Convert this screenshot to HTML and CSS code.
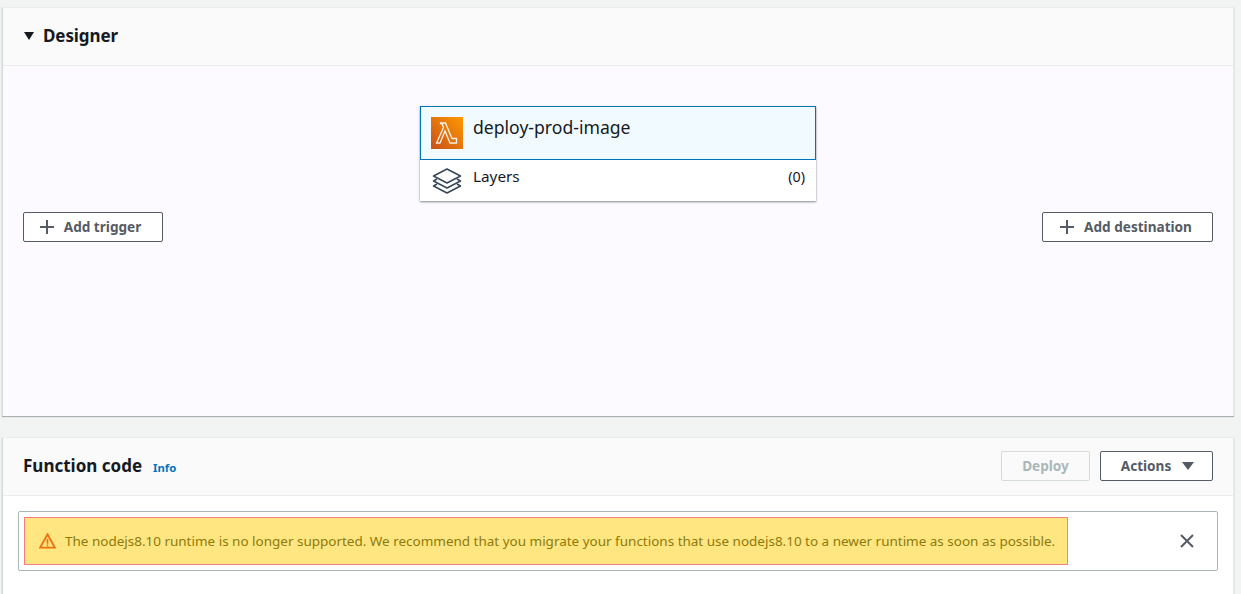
FILE: index.html
```html
<!DOCTYPE html>
<html lang="en">
<head>
<meta charset="utf-8">
<title>Lambda function</title>
<link rel="stylesheet" href="styles.css">
</head>
<body>
<main class="page">
  <section class="card designer">
    <header class="card-head head-designer">
      <span class="caret"></span>
      <h2 class="title">Designer</h2>
    </header>
    <div class="canvas">
      <div class="side side-left">
        <button class="btn btn-add"><svg class="plus" viewBox="0 0 14 14"><path d="M7 0v14M0 7h14"/></svg>Add trigger</button>
      </div>
      <div class="node">
        <div class="node-fn">
          <svg class="lambda" viewBox="0 0 32 32">
            <defs><linearGradient id="lg" x1="0" y1="1" x2="1" y2="0"><stop offset="0" stop-color="#c8511b"/><stop offset="1" stop-color="#f90"/></linearGradient></defs>
            <rect width="32" height="32" fill="url(#lg)"/>
            <path d="M9.500 6h5l6.500 15.500h4.500v4.500h-6.500l-5-12-5 12H5.500l7-15.500-1.500-4H9.500z" fill="none" stroke="#fff" stroke-opacity=".9" stroke-width="1.300"/>
          </svg>
          <span class="fn-name">deploy-prod-image</span>
        </div>
        <div class="node-layers">
          <svg class="layers" viewBox="0 0 30 26"><g fill="none" stroke="#37475a" stroke-width="1.500" stroke-linejoin="round"><path d="M15 1 28.500 8 15 15 1.500 8z"/><path d="M5 11 1.500 13 15 20 28.500 13 25 11"/><path d="M5 16 1.500 18 15 25 28.500 18 25 16"/></g></svg>
          <span class="layers-name">Layers</span>
          <span class="layers-count">(0)</span>
        </div>
      </div>
      <div class="side side-right">
        <button class="btn btn-add"><svg class="plus" viewBox="0 0 14 14"><path d="M7 0v14M0 7h14"/></svg>Add destination</button>
      </div>
    </div>
  </section>

  <section class="card code">
    <header class="card-head">
      <h2 class="title">Function code</h2>
      <a class="info">Info</a>
      <div class="actions">
        <button class="btn btn-deploy">Deploy</button>
        <button class="btn btn-actions">Actions<span class="caret caret-small"></span></button>
      </div>
    </header>
    <div class="code-body">
      <div class="alert-frame">
        <div class="alert">
          <svg class="warn" viewBox="0 0 16 15"><path d="M8 1.200 15 13.800H1z" fill="none" stroke="#ec7211" stroke-width="1.700" stroke-linejoin="miter"/><path d="M8 5.500v4.500M8 10.800v1.700" stroke="#ec7211" stroke-width="1.600" fill="none"/></svg>
          <span class="alert-text">The nodejs8.10 runtime is no longer supported. We recommend that you migrate your functions that use nodejs8.10 to a newer runtime as soon as possible.</span>
        </div>
        <svg class="close" viewBox="0 0 14 14"><path d="M1 1l12 12M13 1 1 13"/></svg>
      </div>
    </div>
  </section>
</main>
</body>
</html>
```

FILE: styles.css
```css
* { box-sizing: border-box; }
html, body { margin: 0; height: 100%; overflow: hidden; }
body {
  background: #f2f3f3;
  font-family: "Noto Sans", "Open Sans", sans-serif;
  color: #16191f;
}
.page { padding: 7px 7px 0 2px; display: flex; flex-direction: column; gap: 21px; }
.card {
  background: #fff;
  border-left: 1px solid #d5dbdb;
  border-right: 1px solid #e4e8e8;
  border-top: 1px solid #eaeded;
  box-shadow: 0 1px 1px rgba(0,28,36,.3);
}
.card-head {
  height: 58px;
  display: flex;
  align-items: center;
  padding: 0 20px 2px;
  background: #fafafa;
  border-bottom: 1px solid #eaeded;
}
.head-designer { padding-left: 21px; }
.title { margin: 0; font-size: 17px; line-height: 22px; font-weight: 700; color: #16191f; letter-spacing: -.1px; }
.code .title { letter-spacing: 0; }
.caret {
  width: 0; height: 0;
  border-left: 5.500px solid transparent;
  border-right: 5.500px solid transparent;
  border-top: 8px solid #16191f;
  margin-right: 9px;
}
.canvas {
  height: 350px;
  background: #fcfaff;
  padding: 40px 20px 0;
  display: grid;
  grid-template-columns: 1fr 396px 1fr;
  align-items: start;
}
.side { padding-top: 106px; display: flex; }
.side-right { justify-content: flex-end; }
.btn {
  font-family: inherit;
  font-size: 13.600px;
  font-weight: 700;
  height: 30px;
  border-radius: 2px;
  background: #fff;
  color: #545b64;
  border: 1px solid #545b64;
  display: inline-flex;
  align-items: center;
  padding: 0 0 1px;
}
.btn-add { justify-content: center; gap: 10px; }
.side-left .btn-add { width: 140px; padding-right: 5px; }
.side-right .btn-add { width: 171px; padding-right: 3px; }
.plus { width: 14px; height: 14px; fill: none; stroke: #545b64; stroke-width: 2; }
.node {
  background: #fff;
  height: 95px;
  box-shadow: 0 1px 2px rgba(0,28,36,.5);
  display: flex;
  flex-direction: column;
}
.node-fn {
  flex: none;
  height: 54px;
  background: #f1faff;
  border: 1px solid #0073bb;
  display: flex;
  align-items: flex-start;
  padding: 10px 10px 0;
  gap: 10px;
}
.lambda { width: 32px; height: 32px; flex: none; }
.fn-name { font-size: 17.600px; line-height: 21px; color: #16191f; }
.node-layers {
  flex: 1;
  display: flex;
  align-items: center;
  padding: 0 11px 0 12px;
  font-size: 15.300px;
  color: #16191f;
}
.layers { width: 30px; height: 26px; margin-right: 11px; }
.layers-name, .layers-count { padding-bottom: 9px; }
.layers-count { margin-left: auto; font-size: 14.300px; }
.info { font-size: 11.300px; font-weight: 700; color: #0073bb; margin-left: 11px; padding-top: 3px; }
.actions { margin-left: auto; display: flex; gap: 10px; }
.btn-deploy {
  width: 89px;
  justify-content: center;
  color: #aab7b8;
  border-color: #d5dbdb;
  background: #fafafa;
}
.btn-actions { width: 113px; justify-content: center; gap: 11px; background: #fff; padding-left: 2px; }
.caret-small { border-left-width: 6px; border-right-width: 6px; border-top-width: 8px; border-top-color: #545b64; margin: 1px 0 0; }
.code-body { background: #fff; height: 98px; padding: 15px 15px 0 15px; }
.alert-frame {
  height: 60px;
  border: 1px solid #aab7b8;
  border-radius: 2px;
  background: #fff;
  display: flex;
  align-items: center;
  padding: 5px 23px 5px 5px;
  justify-content: space-between;
}
.alert {
  width: 1044px;
  height: 48px;
  background: #ffe680;
  border: 1px solid #f5807f;
  display: flex;
  align-items: center;
  padding-left: 14px;
  gap: 9px;
}
.warn { width: 17px; height: 16px; flex: none; }
.alert-text { font-size: 13.480px; color: #8d7a0c; white-space: nowrap; }
.close { width: 14px; height: 14px; fill: none; stroke: #545b64; stroke-width: 2; }
```
